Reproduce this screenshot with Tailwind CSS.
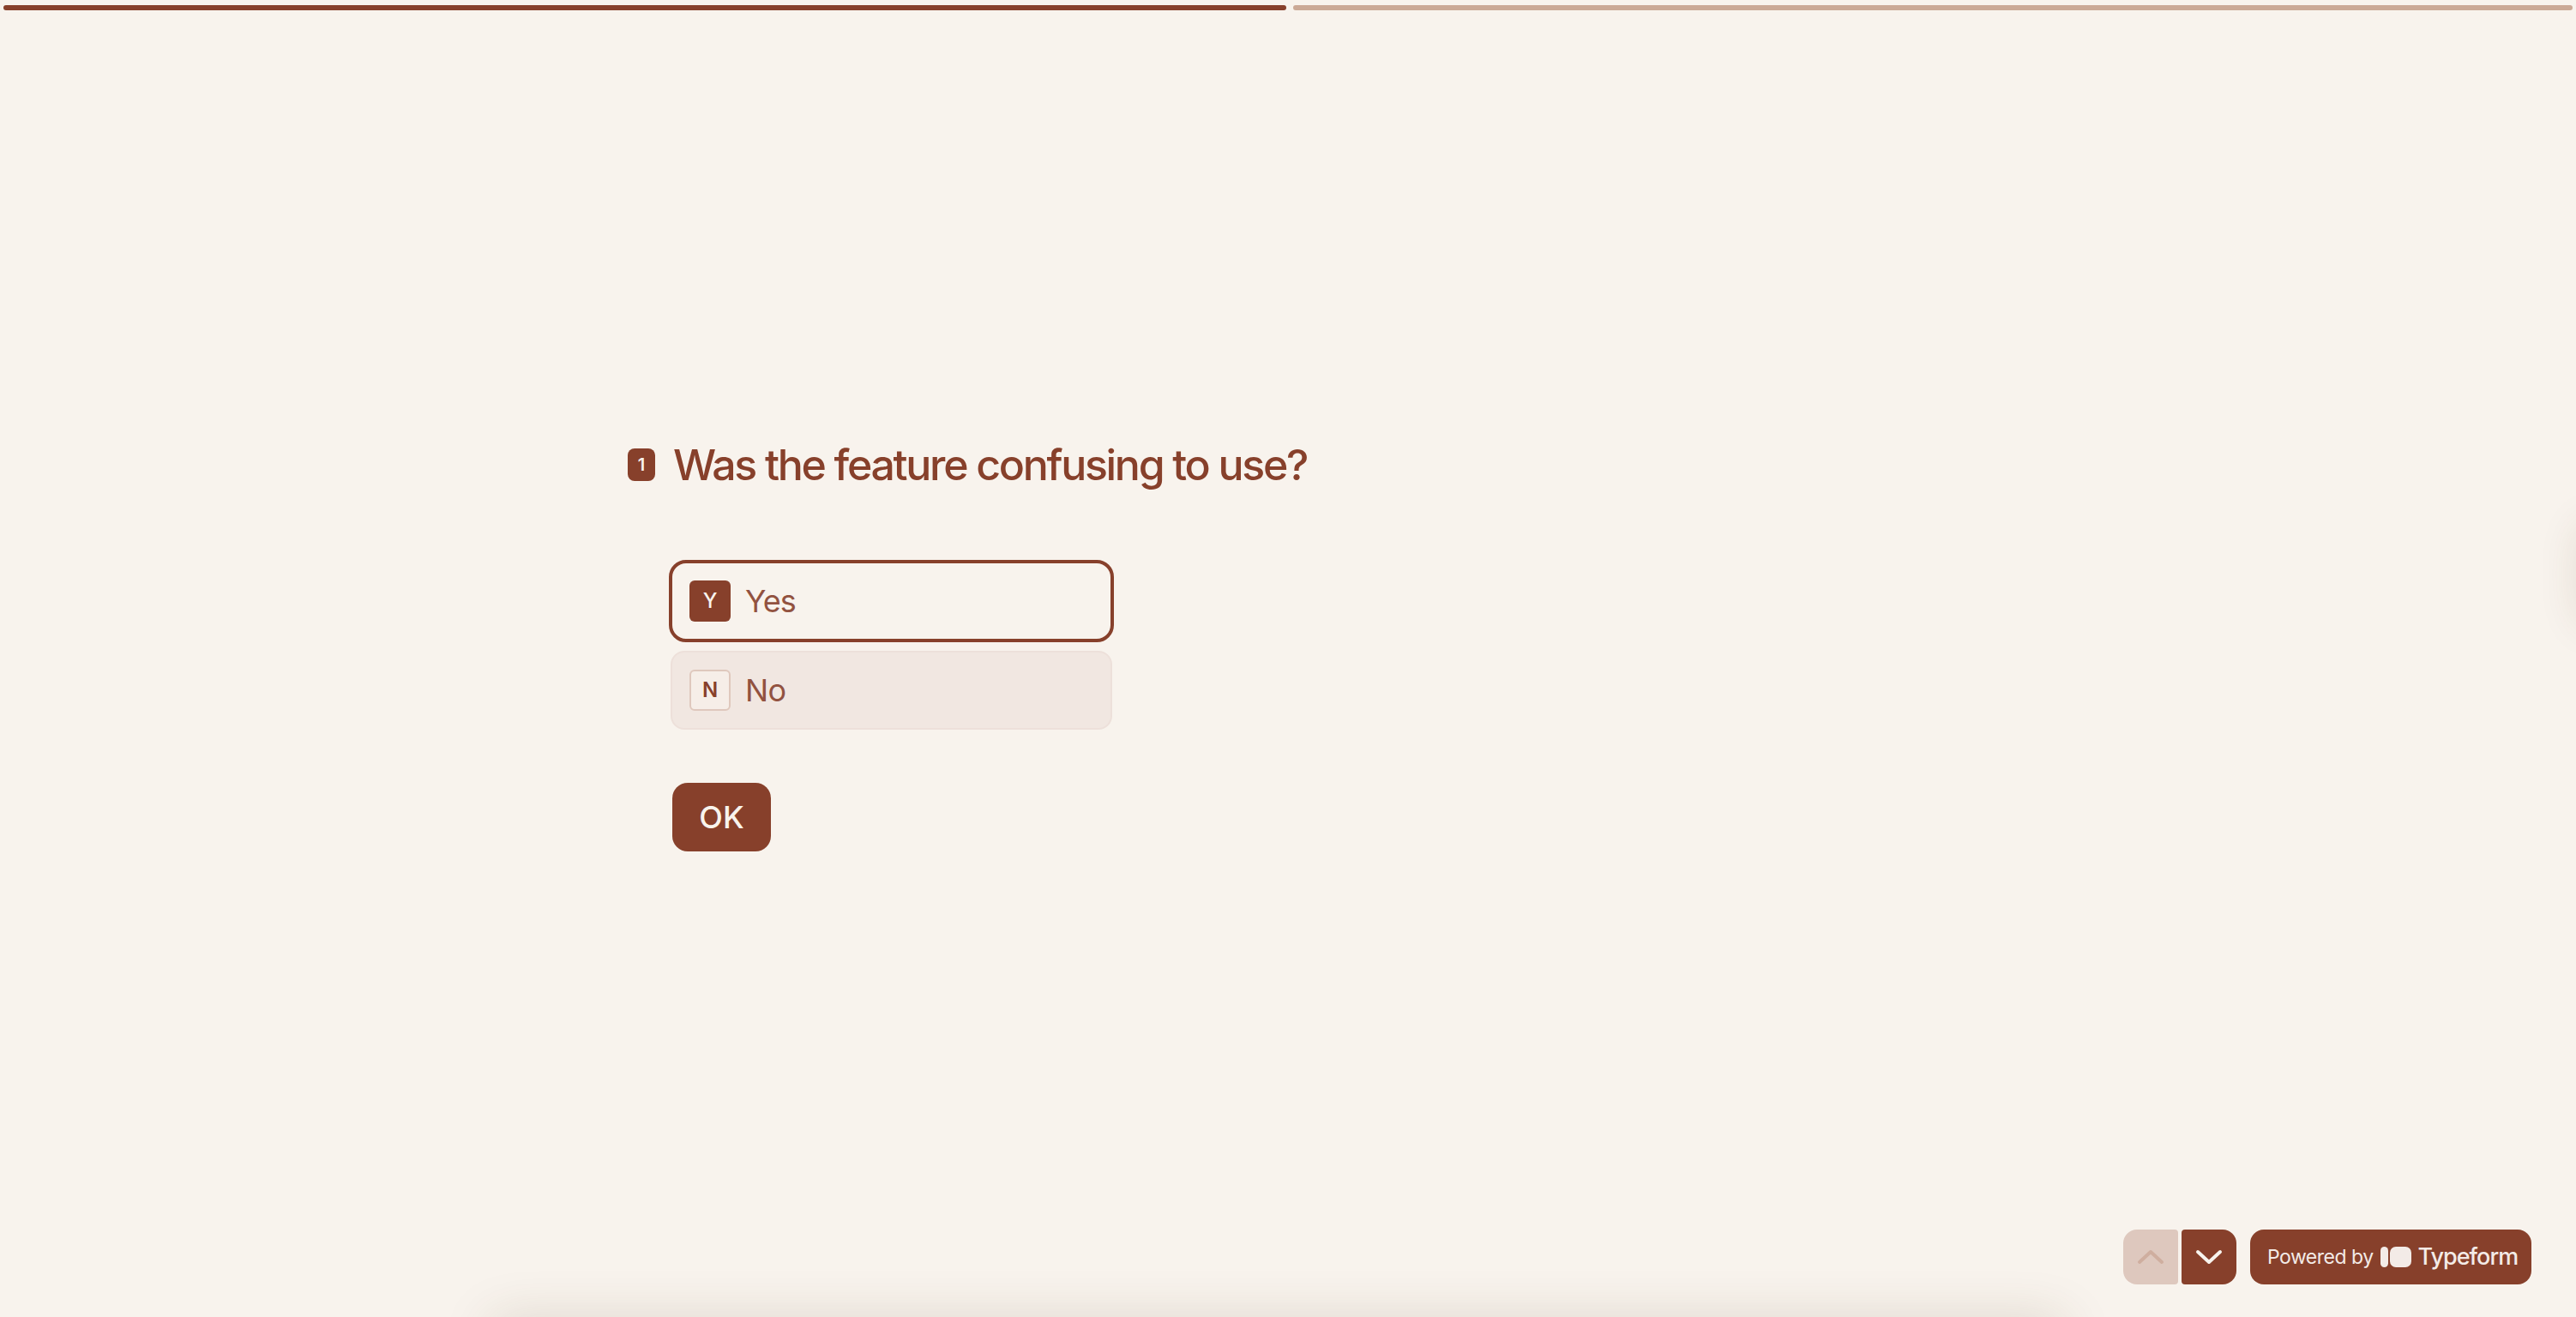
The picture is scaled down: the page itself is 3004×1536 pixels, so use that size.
<!DOCTYPE html>
<html lang="en">
<head>
  <meta charset="UTF-8">
  <title>Was the feature confusing to use?</title>
  <script src="https://cdn.jsdelivr.net/npm/@tailwindcss/browser@4"></script>
</head>
<body class="bg-[#f8f3ed] font-['Inter',sans-serif] text-[#87402b]">
  <div class="relative h-[1536px] w-[3004px] overflow-hidden">
    <!-- progress -->
    <div class="flex gap-[8px] pt-[6px] px-[4px]">
      <div class="h-[6px] w-[1496px] rounded-full bg-[#87402b]"></div>
      <div class="h-[6px] flex-1 rounded-full bg-[#cba996]"></div>
    </div>

    <!-- question -->
    <main class="pl-[732px] pt-[498px]">
      <div class="flex items-center gap-[21px] h-[64px]">
        <span class="flex h-[38px] w-[32px] items-center justify-center rounded-[8px] bg-[#87402b] text-[20px] font-semibold text-[#f8f3ed]">1</span>
        <h1 class="text-[50px] leading-[64px] font-medium tracking-[-2.3px] whitespace-nowrap">Was the feature confusing to use?</h1>
      </div>

      <div class="ml-[48px] mt-[79px] flex w-[519px] flex-col gap-[10px]">
        <div class="flex h-[96px] items-center gap-[17px] rounded-[20px] border-[4px] border-[#87402b] pl-[20px]">
          <span class="flex h-[48px] w-[48px] items-center justify-center rounded-[6px] bg-[#87402b] text-[24px] font-medium text-[#f8f3ed]">Y</span>
          <span class="text-[36px] leading-none tracking-[-1px] text-[#925240]">Yes</span>
        </div>
        <div class="mx-[2px] flex h-[92px] items-center gap-[17px] rounded-[16px] border-[2px] border-[#ede0da] bg-[#f1e7e1] pl-[20px]">
          <span class="flex h-[48px] w-[48px] items-center justify-center rounded-[6px] border-[2px] border-[#dfc8bd] bg-[#f6eee8] text-[24px] font-semibold">N</span>
          <span class="text-[36px] leading-none tracking-[-0.5px] text-[#925240]">No</span>
        </div>
      </div>

      <button class="ml-[52px] mt-[62px] block h-[80px] w-[115px] rounded-[18px] bg-[#87402b] text-[36px] font-medium text-[#f8f3ed]">OK</button>
    </main>

    <!-- edge shadows -->
    <div class="absolute left-[570px] top-[1540px] h-[40px] w-[1840px] rounded-[20px] shadow-[0_0_60px_rgba(80,60,30,0.18)]"></div>
    <div class="absolute left-[3010px] top-[610px] h-[120px] w-[40px] rounded-[20px] shadow-[0_0_50px_rgba(80,60,30,0.14)]"></div>

    <!-- bottom right controls -->
    <div class="absolute left-[2476px] top-[1434px] flex h-[64px] items-stretch">
      <button class="flex w-[64px] items-center justify-center rounded-l-[16px] rounded-r-[4px] bg-[#dec8be]">
        <svg width="32" height="18" viewBox="0 0 32 18" fill="none"><path d="M3 15 L16 3 L29 15" stroke="#cfae9f" stroke-width="4" stroke-linecap="round" stroke-linejoin="round"/></svg>
      </button>
      <button class="ml-[4px] flex w-[64px] items-center justify-center rounded-r-[16px] rounded-l-[4px] bg-[#87402b]">
        <svg width="32" height="18" viewBox="0 0 32 18" fill="none"><path d="M3 3 L16 15 L29 3" stroke="#f8f3ed" stroke-width="4" stroke-linecap="round" stroke-linejoin="round"/></svg>
      </button>
      <a class="ml-[16px] flex w-[328px] items-center rounded-[16px] bg-[#87402b] pl-[20px] text-[#f3ebe7]">
        <span class="text-[23px] tracking-[-0.5px] whitespace-nowrap">Powered by</span>
        <svg class="ml-[8px]" width="36" height="24" viewBox="0 0 36 24" fill="#f3ebe7"><rect x="0" y="0" width="9" height="24" rx="4.5"/><rect x="11" y="0" width="25" height="24" rx="7"/></svg>
        <span class="ml-[8px] text-[27px] font-medium tracking-[-1px] whitespace-nowrap">Typeform</span>
      </a>
    </div>
  </div>
</body>
</html>
